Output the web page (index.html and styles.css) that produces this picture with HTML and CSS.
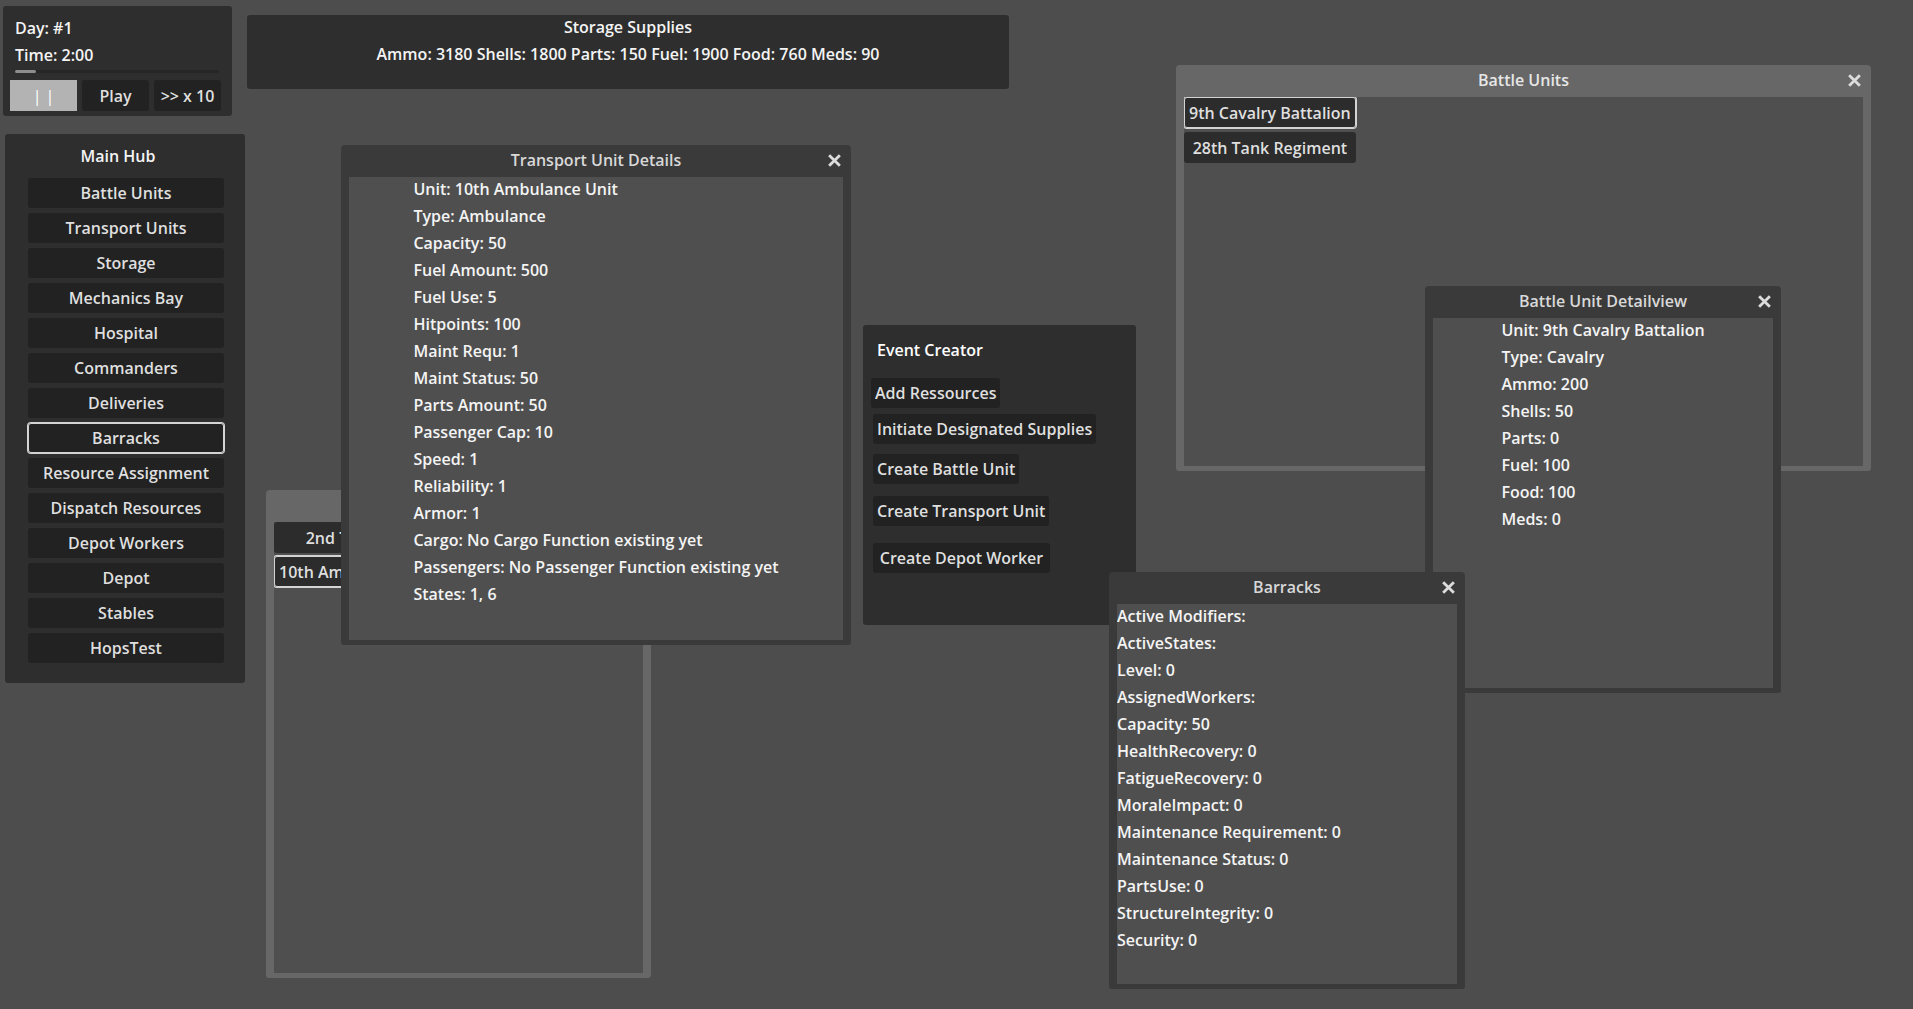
FILE: index.html
```html
<!DOCTYPE html>
<html lang="en">
<head>
    <meta charset="UTF-8">
    <title>Depot Manager</title>
    <link rel="stylesheet" href="styles.css">
</head>
<body>
    <div class="hud">
        <div class="hud-left">
            <div class="panel clock">
                <div class="label">Day: #1</div>
                <div class="label">Time: 2:00</div>
                <div class="progress"><div class="progress-fill" style="width: 10.5%"></div></div>
                <div class="speed-row">
                    <button class="btn btn-pause">| |</button>
                    <button class="btn">Play</button>
                    <button class="btn">&gt;&gt; x 10</button>
                </div>
            </div>
            <div class="panel hub">
                <div class="hub-title">Main Hub</div>
                <div class="hub-list">
                    <button class="btn">Battle Units</button>
                    <button class="btn">Transport Units</button>
                    <button class="btn">Storage</button>
                    <button class="btn">Mechanics Bay</button>
                    <button class="btn">Hospital</button>
                    <button class="btn">Commanders</button>
                    <button class="btn">Deliveries</button>
                    <button class="btn focused">Barracks</button>
                    <button class="btn">Resource Assignment</button>
                    <button class="btn">Dispatch Resources</button>
                    <button class="btn">Depot Workers</button>
                    <button class="btn">Depot</button>
                    <button class="btn">Stables</button>
                    <button class="btn">HopsTest</button>
                </div>
            </div>
        </div>
        <div class="panel storage">
            <div class="label">Storage Supplies</div>
            <div class="label">Ammo: 3180 Shells: 1800 Parts: 150 Fuel: 1900 Food: 760 Meds: 90</div>
        </div>
    </div>

    <!-- floating panels / windows -->
    <div class="panel event-creator">
        <div class="label">Event Creator</div>
        <button class="btn">Add Ressources</button>
        <button class="btn">Initiate Designated Supplies</button>
        <button class="btn">Create Battle Unit</button>
        <button class="btn">Create Transport Unit</button>
        <button class="btn">Create Depot Worker</button>
    </div>

    <div class="window inactive win-transport-list">
        <div class="window-title">Transport Units
            <svg class="window-close" viewBox="0 0 14 14"><path d="M2 2L12 12M12 2L2 12"/></svg>
        </div>
        <div class="window-body">
            <div class="unit-list">
                <button class="btn">2nd Transport</button>
                <button class="btn focused">10th Ambulance Unit</button>
            </div>
        </div>
    </div>

    <div class="window win-transport-detail">
        <div class="window-title">Transport Unit Details
            <svg class="window-close" viewBox="0 0 14 14"><path d="M2 2L12 12M12 2L2 12"/></svg>
        </div>
        <div class="window-body centered">
            <div class="stats">
                <div class="label">Unit: 10th Ambulance Unit</div>
                <div class="label">Type: Ambulance</div>
                <div class="label">Capacity: 50</div>
                <div class="label">Fuel Amount: 500</div>
                <div class="label">Fuel Use: 5</div>
                <div class="label">Hitpoints: 100</div>
                <div class="label">Maint Requ: 1</div>
                <div class="label">Maint Status: 50</div>
                <div class="label">Parts Amount: 50</div>
                <div class="label">Passenger Cap: 10</div>
                <div class="label">Speed: 1</div>
                <div class="label">Reliability: 1</div>
                <div class="label">Armor: 1</div>
                <div class="label">Cargo: No Cargo Function existing yet</div>
                <div class="label">Passengers: No Passenger Function existing yet</div>
                <div class="label">States: 1, 6</div>
            </div>
        </div>
    </div>

    <div class="window inactive win-battle-list">
        <div class="window-title">Battle Units
            <svg class="window-close" viewBox="0 0 14 14"><path d="M2 2L12 12M12 2L2 12"/></svg>
        </div>
        <div class="window-body">
            <div class="unit-list">
                <button class="btn focused">9th Cavalry Battalion</button>
                <button class="btn">28th Tank Regiment</button>
            </div>
        </div>
    </div>

    <div class="window win-battle-detail">
        <div class="window-title">Battle Unit Detailview
            <svg class="window-close" viewBox="0 0 14 14"><path d="M2 2L12 12M12 2L2 12"/></svg>
        </div>
        <div class="window-body centered">
            <div class="stats">
                <div class="label">Unit: 9th Cavalry Battalion</div>
                <div class="label">Type: Cavalry</div>
                <div class="label">Ammo: 200</div>
                <div class="label">Shells: 50</div>
                <div class="label">Parts: 0</div>
                <div class="label">Fuel: 100</div>
                <div class="label">Food: 100</div>
                <div class="label">Meds: 0</div>
            </div>
        </div>
    </div>

    <div class="window win-barracks">
        <div class="window-title">Barracks
            <svg class="window-close" viewBox="0 0 14 14"><path d="M2 2L12 12M12 2L2 12"/></svg>
        </div>
        <div class="window-body">
            <div class="stats">
                <div class="label">Active Modifiers:</div>
                <div class="label">ActiveStates:</div>
                <div class="label">Level: 0</div>
                <div class="label">AssignedWorkers:</div>
                <div class="label">Capacity: 50</div>
                <div class="label">HealthRecovery: 0</div>
                <div class="label">FatigueRecovery: 0</div>
                <div class="label">MoraleImpact: 0</div>
                <div class="label">Maintenance Requirement: 0</div>
                <div class="label">Maintenance Status: 0</div>
                <div class="label">PartsUse: 0</div>
                <div class="label">StructureIntegrity: 0</div>
                <div class="label">Security: 0</div>
            </div>
        </div>
    </div>
</body>
</html>
```

FILE: styles.css
```css
body {
    margin: 0;
    width: 1913px;
    height: 1009px;
    overflow: hidden;
    position: relative;
    background-color: #4d4d4d;
    font-family: "Open Sans", "Noto Sans", sans-serif;
    font-weight: 600;
    font-size: 16px;
    color: #f4f4f4;
}
.label {
    line-height: 23px;
    white-space: nowrap;
}
.btn {
    font: inherit;
    color: #dfdfdf;
    background-color: #222;
    border: none;
    border-radius: 3px;
    height: 30px;
    padding: 0 4px;
    white-space: nowrap;
    box-sizing: border-box;
    cursor: pointer;
}
.btn.focused {
    box-shadow: 0 0 0 1px #d4d4d4, inset 0 0 0 1px #d4d4d4;
}
.panel {
    background-color: #2e2e2e;
    border-radius: 3px;
    box-sizing: border-box;
}

/* top left hud */
.hud {
    display: flex;
    align-items: flex-start;
}
.hud-left {
    display: flex;
    flex-direction: column;
    padding: 6px 0 0 3px;
}
.clock {
    width: 229px;
    height: 110px;
    padding: 11px 11px 5px 7px;
}
.clock .label {
    margin-left: 5px;
}
.clock .label + .label {
    margin-top: 4px;
}
.progress {
    width: 204px;
    height: 3px;
    margin: 3px 0 0 5px;
    background-color: #262626;
    border-radius: 2px;
}
.progress-fill {
    height: 100%;
    background-color: #8e8e8e;
    border-radius: 2px;
}
.speed-row {
    display: grid;
    grid-template-columns: repeat(3, 67px);
    gap: 5px;
    margin-top: 7px;
}
.speed-row .btn {
    height: 31px;
    padding: 0;
}
.btn-pause {
    background-color: #b3b3b3;
    color: #fff;
    border-radius: 0;
    font-weight: 400;
}
.hub {
    width: 240px;
    height: 549px;
    margin: 18px 0 0 2px;
    padding: 11px 21px 0 23px;
}
.hub-title {
    line-height: 23px;
    text-align: center;
    padding-right: 16px;
    margin-bottom: 10px;
}
.hub-list {
    display: flex;
    flex-direction: column;
    gap: 5px;
}
.hub-list .btn {
    width: 196px;
}
.storage {
    width: 762px;
    height: 74px;
    margin: 15px 0 0 2px;
    padding-top: 1px;
    text-align: center;
}
.storage .label + .label {
    margin-top: 4px;
}

/* event creator */
.event-creator {
    position: absolute;
    left: 863px;
    top: 325px;
    width: 273px;
    height: 300px;
    padding: 14px 0 0 8px;
    display: flex;
    flex-direction: column;
    align-items: flex-start;
}
.event-creator .label {
    margin-left: 6px;
    color: #fff;
}
.event-creator .btn:nth-child(2) { margin-top: 16px; }
.event-creator .btn:nth-child(3) { margin: 6px 0 0 2px; }
.event-creator .btn:nth-child(4) { margin: 10px 0 0 2px; }
.event-creator .btn:nth-child(5) { margin: 12px 0 0 2px; }
.event-creator .btn:nth-child(6) { margin: 17px 0 0 2px; width: 177px; }

/* windows */
.window {
    position: absolute;
    box-sizing: border-box;
    display: flex;
    flex-direction: column;
    padding: 0 8px 5px;
    background-color: #3a3a3a;
    border-radius: 4px 4px 3px 3px;
}
.window.inactive {
    background-color: #676767;
}
.window-title {
    position: relative;
    height: 32px;
    box-sizing: border-box;
    padding-bottom: 2px;
    flex: none;
    display: flex;
    align-items: center;
    justify-content: center;
    color: #d8d8d8;
    white-space: nowrap;
}
.window.inactive .window-title {
    color: #e6e6e6;
}
.window-close {
    position: absolute;
    right: 1px;
    top: 8px;
    width: 15px;
    height: 15px;
    fill: none;
    stroke: #dcdcdc;
    stroke-width: 2.6;
}
.window-body {
    flex: 1;
    background-color: #4f4f4f;
    overflow: hidden;
}
.window-body.centered {
    display: flex;
    justify-content: center;
    align-items: flex-start;
}
.stats {
    display: flex;
    flex-direction: column;
    gap: 4px;
    padding-top: 1px;
}
.unit-list {
    display: inline-flex;
    flex-direction: column;
    gap: 4px;
}
.unit-list .btn {
    height: 31px;
    padding: 0 5px;
    background-color: #2c2c2c;
}
.win-transport-list .unit-list {
    gap: 3px;
}

.win-transport-list {
    left: 266px;
    top: 490px;
    width: 385px;
    height: 488px;
}
.win-transport-detail {
    left: 341px;
    top: 145px;
    width: 510px;
    height: 500px;
}
.win-battle-list {
    left: 1176px;
    top: 65px;
    width: 695px;
    height: 406px;
}
.win-battle-detail {
    left: 1425px;
    top: 286px;
    width: 356px;
    height: 407px;
}
.win-barracks {
    left: 1109px;
    top: 572px;
    width: 356px;
    height: 417px;
}
```
